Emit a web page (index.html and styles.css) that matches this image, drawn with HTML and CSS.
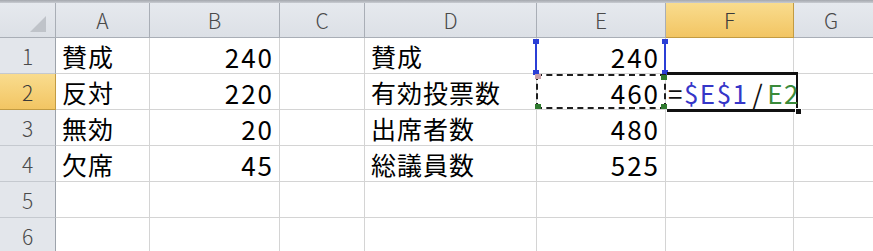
FILE: index.html
```html
<!DOCTYPE html>
<html lang="ja">
<head>
<meta charset="utf-8">
<link rel="stylesheet" href="styles.css">
</head>
<body>
<div class="sheet">
  <div class="topband"></div>
  <div class="grid">
    <div class="hd corner"><span class="tri"></span></div>
    <div class="hd col">A</div>
    <div class="hd col">B</div>
    <div class="hd col">C</div>
    <div class="hd col">D</div>
    <div class="hd col">E</div>
    <div class="hd col sel">F</div>
    <div class="hd col last">G</div>

    <div class="hd row">1</div>
    <div class="c txt">賛成</div>
    <div class="c num">240</div>
    <div class="c"></div>
    <div class="c txt">賛成</div>
    <div class="c num ref1">240<span class="refbox"><i class="sq tl"></i><i class="sq tr"></i><i class="sq bl"></i><i class="sq br"></i></span></div>
    <div class="c"></div>
    <div class="c last"></div>

    <div class="hd row sel">2</div>
    <div class="c txt">反対</div>
    <div class="c num">220</div>
    <div class="c"></div>
    <div class="c txt">有効投票数</div>
    <div class="c num ref2">460<span class="ants"><i class="gq tl"></i><i class="gq tr"></i><i class="gq bl"></i><i class="gq br"></i></span></div>
    <div class="c edit"><span class="editor"><span class="k">=</span><span class="b">$E$1</span><span class="k sl">/</span><span class="g">E2</span><i class="handle"></i></span></div>
    <div class="c last"></div>

    <div class="hd row">3</div>
    <div class="c txt">無効</div>
    <div class="c num">20</div>
    <div class="c"></div>
    <div class="c txt">出席者数</div>
    <div class="c num">480</div>
    <div class="c"></div>
    <div class="c last"></div>

    <div class="hd row">4</div>
    <div class="c txt">欠席</div>
    <div class="c num">45</div>
    <div class="c"></div>
    <div class="c txt">総議員数</div>
    <div class="c num">525</div>
    <div class="c"></div>
    <div class="c last"></div>

    <div class="hd row">5</div>
    <div class="c"></div>
    <div class="c"></div>
    <div class="c"></div>
    <div class="c"></div>
    <div class="c"></div>
    <div class="c"></div>
    <div class="c last"></div>

    <div class="hd row">6</div>
    <div class="c"></div>
    <div class="c"></div>
    <div class="c"></div>
    <div class="c"></div>
    <div class="c"></div>
    <div class="c"></div>
    <div class="c last"></div>
  </div>
</div>
</body>
</html>
```

FILE: styles.css
```css
* { box-sizing: border-box; }
html, body { margin: 0; padding: 0; background: #fff; overflow: hidden; }
body { width: 873px; height: 251px; }
.sheet {
  width: 873px;
  height: 251px;
  overflow: hidden;
  font-family: "Noto Sans CJK JP", "Liberation Sans", sans-serif;
}
.topband {
  height: 3px;
  background: linear-gradient(#a4a7ad, #c9ccd2);
}
.grid {
  display: grid;
  grid-template-columns: 56px 94px 130px 85px 172px 129px 128px 79px;
  grid-template-rows: 35px repeat(6, 36px);
}
.hd {
  background: linear-gradient(#e6e9ee, #dce0e6);
  border-right: 1px solid #a9aeb6;
  border-bottom: 1px solid #a9aeb6;
  color: #4a4a4a;
  font-size: 21px;
  font-weight: 300;
  display: flex;
  align-items: center;
  justify-content: center;
  line-height: 1;
}
.hd.row { background: #e3e6eb; border-right-color: #9da3ab; border-bottom-color: #c5c9cf; padding-top: 2px; }
.hd.col { padding-top: 1px; }
.hd.last { justify-content: flex-start; padding-left: 30px; border-right: none; }
.hd.sel {
  background: linear-gradient(#f9dc8e, #f2c563);
  border-right-color: #c29b42;
  border-bottom-color: #c29b42;
  color: #3a3a3a;
}
.corner { position: relative; }
.tri {
  position: absolute;
  right: 9px;
  bottom: 5px;
  width: 0;
  height: 0;
  border-left: 16px solid transparent;
  border-bottom: 16px solid #bfc3c9;
}
.c {
  border-right: 1px solid #d4d4d4;
  border-bottom: 1px solid #d4d4d4;
  font-size: 25px;
  color: #000;
  display: flex;
  align-items: center;
  line-height: 1;
  white-space: nowrap;
  padding-top: 2px;
}
.c.last { border-right: none; }
.txt { padding-left: 6px; letter-spacing: 1px; }
.num { justify-content: flex-end; padding-right: 5px; letter-spacing: 2px; font-size: 26px; }
.ref1, .ref2, .edit { position: relative; }
.refbox {
  position: absolute;
  left: -2px;
  right: -1px;
  top: 1px;
  bottom: -1px;
  border-left: 2px solid #2b3fd6;
  border-right: 2px solid #2b3fd6;
}
.sq {
  position: absolute;
  width: 6px;
  height: 5px;
  background: #2b3fd6;
}
.sq.tl { left: -4px; top: 0; }
.sq.tr { right: -4px; top: 0; }
.sq.bl { left: -4px; bottom: -1px; }
.sq.br { right: -4px; bottom: -1px; }
.ants {
  position: absolute;
  left: -1px;
  right: -1px;
  top: 0;
  bottom: 0;
  border: 2px dashed #1e1e1e;
}
.gq {
  position: absolute;
  width: 6px;
  height: 5px;
  background: #2f7a2f;
}
.gq.tl { left: -3px; top: -2px; background: #c9a0a8; }
.gq.tr { right: -3px; top: -1px; }
.gq.bl { left: -3px; bottom: -2px; }
.gq.br { right: -3px; bottom: -2px; }
.edit { overflow: visible; }
.editor {
  position: absolute;
  left: 1px;
  top: -2px;
  width: 131px;
  height: 40px;
  background: #fff;
  border-top: 3px solid #111;
  border-bottom: 3px solid #111;
  border-right: 2px solid #111;
  display: flex;
  align-items: center;
  padding-left: 1px;
  padding-top: 2px;
  font-size: 26px;
  letter-spacing: 1.5px;
  z-index: 2;
}
.editor .k { color: #111; }
.editor .b { color: #3536c8; }
.editor .g { color: #3a8a3a; }
.editor .sl { margin: 0 3px 0 4px; }
.handle {
  position: absolute;
  right: -6px;
  bottom: -6px;
  width: 7px;
  height: 7px;
  background: #111;
  border: 1px solid #fff;
}
```
